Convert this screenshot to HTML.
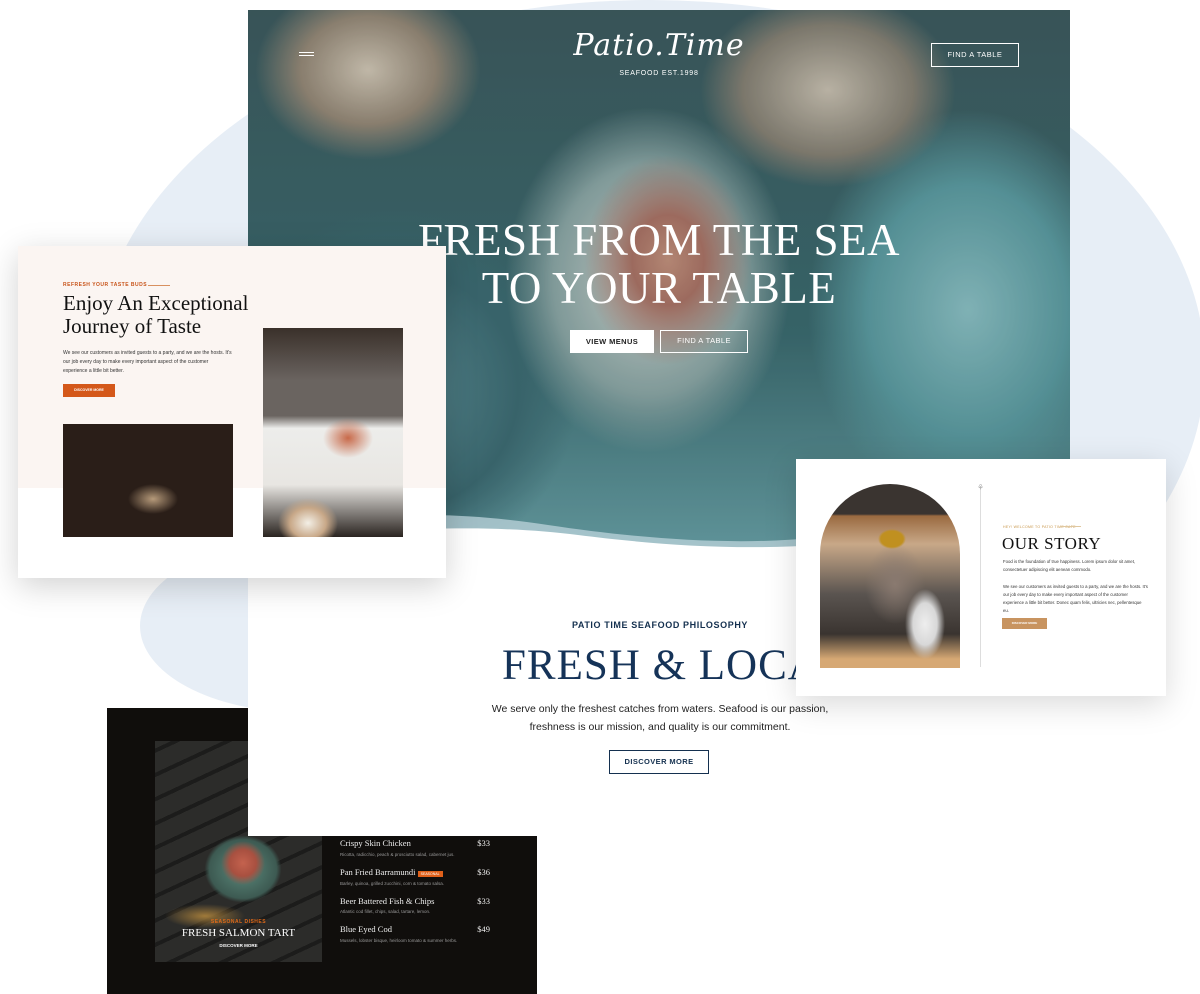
<!DOCTYPE html>
<html><head><meta charset="utf-8">
<style>
*{margin:0;padding:0;box-sizing:border-box}
body{width:1200px;height:994px;overflow:hidden;background:#fff;position:relative;font-family:"Liberation Sans",sans-serif}
.abs{position:absolute}
.serif{font-family:"Liberation Serif",serif}
</style></head><body>
<!-- pale blue blob -->
<div class="abs" style="left:95px;top:0;width:1110px;height:735px;border-radius:50%;background:#e7eef6"></div>
<div class="abs" style="left:140px;top:540px;width:320px;height:172px;border-radius:50%;background:#e7eef6"></div>

<!-- dark menu card -->
<div class="abs" style="left:107px;top:708px;width:430px;height:286px;background:#100e0c">
  <div class="abs" style="left:48px;top:33px;width:167px;height:221px;background:
    radial-gradient(ellipse 22px 22px at 88px 122px,#c4624e 0,#a85040 60%,rgba(0,0,0,0) 100%),
    radial-gradient(ellipse 48px 42px at 88px 128px,#5c8a7c 0,#3d5a52 70%,rgba(0,0,0,0) 80%),
    radial-gradient(ellipse 40px 12px at 50px 175px,#a07a3a 0,rgba(0,0,0,0) 100%),
    repeating-linear-gradient(-25deg,#2c2c2a 0 18px,#1c1c1b 18px 22px);">
    <div class="abs" style="left:0;top:178px;width:167px;text-align:center;color:#e06a1a;font-size:5px;font-weight:bold;letter-spacing:.5px">SEASONAL DISHES</div>
    <div class="abs serif" style="left:0;top:186px;width:167px;text-align:center;color:#fff;font-size:11px">FRESH SALMON TART</div>
    <div class="abs" style="left:0;top:202px;width:167px;text-align:center;color:#fff;font-size:4.5px;font-weight:bold">DISCOVER MORE</div>
  </div>
</div>

<!-- main white page -->
<div class="abs" style="left:248px;top:10px;width:822px;height:826px;background:#fff"></div>
<!-- hero -->
<div class="abs" style="left:248px;top:10px;width:822px;height:540px;overflow:hidden;background:
  radial-gradient(ellipse 120px 150px at 420px 250px,#c9937e 0,#b07466 30%,rgba(0,0,0,0) 70%),
  radial-gradient(ellipse 190px 230px at 400px 270px,#d8dcd6 0,#8fa9a8 50%,rgba(0,0,0,0) 75%),
  radial-gradient(ellipse 150px 120px at 120px 60px,#d8cbb9 0,#9a8a78 45%,rgba(0,0,0,0) 75%),
  radial-gradient(ellipse 170px 130px at 580px 80px,#cfc4b4 0,#8a8275 50%,rgba(0,0,0,0) 75%),
  radial-gradient(ellipse 200px 250px at 720px 300px,#8fc4c8 0,#5e9ea4 50%,rgba(0,0,0,0) 80%),
  radial-gradient(ellipse 200px 200px at 150px 380px,#5e9098 0,#3e6c74 60%,rgba(0,0,0,0) 90%),
  linear-gradient(180deg,#3e5a5e 0,#3c6b70 60%,#6aa2a8 100%);">
  <div class="abs" style="left:0;top:0;width:822px;height:540px;background:rgba(20,40,45,.12)"></div>
  <div class="abs" style="left:51px;top:42px;width:15px;height:1px;background:#fff;box-shadow:0 3px 0 #fff"></div>
  <div class="abs" style="left:0;top:18px;width:822px;text-align:center;color:#fff;font-family:'DejaVu Serif',serif;font-style:italic;font-size:30px;font-weight:300;letter-spacing:1px">Patio.Time</div>
  <div class="abs" style="left:0;top:60px;width:822px;text-align:center;color:#fff;font-size:7px;letter-spacing:.8px">SEAFOOD EST.1998</div>
  <div class="abs" style="left:683px;top:33px;width:88px;height:24px;border:1.5px solid #fff;color:#fff;font-size:7.5px;text-align:center;line-height:21px;letter-spacing:.5px">FIND A TABLE</div>
  <div class="abs serif" style="left:0;top:206px;width:822px;text-align:center;color:#fff;font-size:45px;line-height:48px;letter-spacing:.5px">FRESH FROM THE SEA<br>TO YOUR TABLE</div>
  <div class="abs" style="left:322px;top:320px;width:84px;height:23px;background:#fff;color:#222;font-size:7.5px;text-align:center;line-height:23px;font-weight:bold;letter-spacing:.4px">VIEW MENUS</div>
  <div class="abs" style="left:412px;top:320px;width:88px;height:23px;border:1.5px solid #fff;color:#fff;font-size:7.5px;text-align:center;line-height:20px;letter-spacing:.4px">FIND A TABLE</div>
  <svg class="abs" style="left:0;top:490px" width="822" height="50" viewBox="0 0 822 50"><path d="M0 40 C120 10 200 10 300 25 S520 50 620 30 S760 0 822 15 L822 50 L0 50Z" fill="#b7cfd7" opacity=".8"/><path d="M0 45 C150 25 250 25 330 35 S520 55 640 38 S780 20 822 30 L822 50 L0 50Z" fill="#fff"/></svg>
</div>

<!-- philosophy -->
<div class="abs" style="left:460px;top:620px;width:400px;text-align:center;color:#14304f;font-size:9px;font-weight:bold;letter-spacing:.6px">PATIO TIME SEAFOOD PHILOSOPHY</div>
<div class="abs serif" style="left:502px;top:641px;width:320px;color:#153358;font-size:43px;letter-spacing:1px;white-space:nowrap">FRESH &amp; LOCAL</div>
<div class="abs" style="left:480px;top:700px;width:360px;text-align:center;color:#222;font-size:10.5px;line-height:18px">We serve only the freshest catches from waters. Seafood is our passion, freshness is our mission, and quality is our commitment.</div>
<div class="abs" style="left:609px;top:750px;width:100px;height:24px;border:1.5px solid #14304f;color:#14304f;font-size:7.5px;font-weight:bold;text-align:center;line-height:21px;letter-spacing:.4px">DISCOVER MORE</div>

<!-- menu list -->
<div class="abs" style="left:340px;top:838px;width:150px;color:#eee;font-size:8px">
  <div class="serif" style="position:absolute;top:0;left:0;width:150px;font-size:8.5px">Crispy Skin Chicken<span style="position:absolute;right:0">$33</span></div>
  <div style="position:absolute;top:14px;font-size:4.5px;color:#999;white-space:nowrap">Ricotta, radicchio, peach &amp; prosciutto salad, cabernet jus.</div>
  <div class="serif" style="position:absolute;top:29px;left:0;width:150px;font-size:8.5px">Pan Fried Barramundi <span style="background:#e0601a;color:#fff;font-size:3.5px;padding:1px 3px;font-family:'Liberation Sans'">SEASONAL</span><span style="position:absolute;right:0">$36</span></div>
  <div style="position:absolute;top:43px;font-size:4.5px;color:#999;white-space:nowrap">Barley, quinoa, grilled zucchini, corn &amp; tomato salsa.</div>
  <div class="serif" style="position:absolute;top:58px;left:0;width:150px;font-size:8.5px">Beer Battered Fish &amp; Chips<span style="position:absolute;right:0">$33</span></div>
  <div style="position:absolute;top:71px;font-size:4.5px;color:#999;white-space:nowrap">Atlantic cod fillet, chips, salad, tartare, lemon.</div>
  <div class="serif" style="position:absolute;top:86px;left:0;width:150px;font-size:8.5px">Blue Eyed Cod<span style="position:absolute;right:0">$49</span></div>
  <div style="position:absolute;top:100px;font-size:4.5px;color:#999;white-space:nowrap">Mussels, lobster bisque, heirloom tomato &amp; summer herbs.</div>
</div>

<!-- left card -->
<div class="abs" style="left:18px;top:246px;width:428px;height:332px;background:linear-gradient(180deg,#fbf5f2 0,#fbf5f2 242px,#fff 242px);box-shadow:0 8px 30px rgba(0,0,0,.18)">
  <div class="abs" style="left:45px;top:36px;color:#c8541a;font-size:5px;font-weight:bold;letter-spacing:.5px">REFRESH YOUR TASTE BUDS</div>
  <div class="abs" style="left:130px;top:39px;width:22px;height:1px;background:#d89060"></div>
  <div class="abs serif" style="left:45px;top:46px;color:#111;font-size:21px;line-height:23px">Enjoy An Exceptional<br>Journey of Taste</div>
  <div class="abs" style="left:45px;top:103px;width:170px;color:#333;font-size:5px;line-height:9px">We see our customers as invited guests to a party, and we are the hosts. It's our job every day to make every important aspect of the customer experience a little bit better.</div>
  <div class="abs" style="left:45px;top:138px;width:52px;height:13px;background:#d4581a;color:#fff;font-size:3.5px;font-weight:bold;text-align:center;line-height:13px">DISCOVER MORE</div>
  <div class="abs" style="left:45px;top:178px;width:170px;height:113px;background:
    radial-gradient(ellipse 25px 15px at 90px 75px,#b69a7a 0,#2a1e18 100%),
    radial-gradient(ellipse 55px 30px at 50px 50px,#d4b57a 0,#8a6a3a 60%,rgba(0,0,0,0) 100%),
    radial-gradient(ellipse 30px 20px at 135px 55px,#7a9a3a 0,rgba(0,0,0,0) 100%),
    linear-gradient(180deg,#3a342e 0,#5a3a24 50%,#2a1e16 100%)"></div>
  <div class="abs" style="left:245px;top:82px;width:140px;height:209px;background:
    radial-gradient(ellipse 25px 20px at 85px 110px,#c86a4a 0,rgba(0,0,0,0) 100%),
    radial-gradient(ellipse 30px 25px at 45px 195px,#f3efe6 0,#c8a888 60%,rgba(0,0,0,0) 100%),
    linear-gradient(180deg,#3a302a 0,#6a6460 25%,#6a6460 42%,#ededeb 48%,#e8e6e2 75%,#2a2420 100%)"></div>
</div>

<!-- right card -->
<div class="abs" style="left:796px;top:459px;width:370px;height:237px;background:#fff;box-shadow:0 8px 30px rgba(0,0,0,.15)">
  <div class="abs" style="left:24px;top:25px;width:140px;height:184px;border-radius:70px 70px 0 0;overflow:hidden;background:
    radial-gradient(ellipse 14px 10px at 72px 55px,#c09020 0,#c09020 80%,rgba(0,0,0,0) 100%),
    radial-gradient(ellipse 30px 40px at 75px 100px,#8a7a70 0,rgba(0,0,0,0) 100%),
    radial-gradient(ellipse 20px 35px at 105px 140px,#eeeeee 0,#d8d8d8 60%,rgba(0,0,0,0) 100%),
    linear-gradient(180deg,#3a3430 0,#3a3430 30px,#9a6a40 32px,#c8a888 60px,#5a5450 110px,#3a3430 150px,#d6a874 175px)"></div>
  <div class="abs" style="left:184px;top:28px;width:1px;height:180px;background:#ddd"></div>
  <div class="abs" style="left:181px;top:24px;color:#aaa;font-size:8px">⚘</div>
  <div class="abs" style="left:207px;top:66px;color:#c8964a;font-size:3.5px;letter-spacing:.3px">HEY! WELCOME TO PATIO TIME CAFE</div>
  <div class="abs" style="left:265px;top:67px;width:20px;height:1px;background:#e0c8a0"></div>
  <div class="abs serif" style="left:206px;top:75px;color:#111;font-size:17px;letter-spacing:.5px">OUR STORY</div>
  <div class="abs" style="left:207px;top:99px;width:145px;color:#333;font-size:4.3px;line-height:8px">Food is the foundation of true happiness. Lorem ipsum dolor sit amet, consectetuer adipiscing elit aenean commodo.</div>
  <div class="abs" style="left:207px;top:124px;width:145px;color:#333;font-size:4.3px;line-height:8px">We see our customers as invited guests to a party, and we are the hosts. It's our job every day to make every important aspect of the customer experience a little bit better. Donec quam felis, ultricies nec, pellentesque eu.</div>
  <div class="abs" style="left:206px;top:159px;width:45px;height:11px;background:#c89460;color:#fff;font-size:3px;text-align:center;line-height:11px;font-weight:bold">DISCOVER MORE</div>
</div>
</body></html>
